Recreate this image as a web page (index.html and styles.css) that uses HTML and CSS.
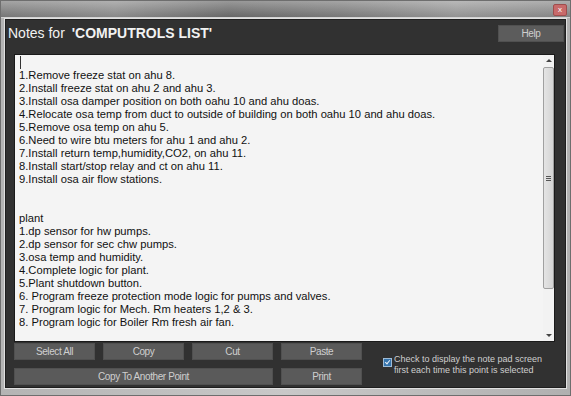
FILE: index.html
```html
<!DOCTYPE html>
<html lang="en">
<head>
  <meta charset="UTF-8">
  <title>Notes</title>
  <link rel="stylesheet" href="styles.css">
</head>
<body>
  <div class="window">
    <!-- blurred window caption -->
    <div class="caption">
      <span class="close">x</span>
    </div>

    <div class="panel">
      <header class="head">
        <h1>Notes for <b>'COMPUTROLS LIST'</b></h1>
        <button class="btn help">Help</button>
      </header>

      <!-- note pad -->
      <div class="notepad">
        <div class="notes">
          <div class="caret"></div>
          <p>1.Remove freeze stat on ahu 8.</p>
          <p>2.Install freeze stat on ahu 2 and ahu 3.</p>
          <p>3.Install osa damper position on both oahu 10 and ahu doas.</p>
          <p>4.Relocate osa temp from duct to outside of building on both oahu 10 and ahu doas.</p>
          <p>5.Remove osa temp on ahu 5.</p>
          <p>6.Need to wire btu meters for ahu 1 and ahu 2.</p>
          <p>7.Install return temp,humidity,CO2, on ahu 11.</p>
          <p>8.Install start/stop relay and ct on ahu 11.</p>
          <p>9.Install osa air flow stations.</p>
          <p>&nbsp;</p>
          <p>&nbsp;</p>
          <p>plant</p>
          <p>1.dp sensor for hw pumps.</p>
          <p>2.dp sensor for sec chw pumps.</p>
          <p>3.osa temp and humidity.</p>
          <p>4.Complete logic for plant.</p>
          <p>5.Plant shutdown button.</p>
          <p>6. Program freeze protection mode logic for pumps and valves.</p>
          <p>7. Program logic for Mech. Rm heaters 1,2 &amp; 3.</p>
          <p>8. Program logic for Boiler Rm fresh air fan.</p>
        </div>
        <div class="scrollbar">
          <span class="arrow up"></span>
          <div class="track">
            <div class="thumb"><span class="grip"></span></div>
          </div>
          <span class="arrow down"></span>
        </div>
      </div>

      <!-- actions -->
      <div class="controls">
        <div class="buttons">
          <button class="btn">Select All</button>
          <button class="btn">Copy</button>
          <button class="btn">Cut</button>
          <button class="btn">Paste</button>
          <button class="btn wide">Copy To Another Point</button>
          <button class="btn">Print</button>
        </div>
        <label class="check">
          <span class="box"></span>
          <span>Check to display the note pad screen<br>first each time this point is selected</span>
        </label>
      </div>
    </div>
  </div>
</body>
</html>
```

FILE: styles.css
```css
/* Page: dark dialog inside a grey frame */
body {
  margin: 0;
  font-family: 'Liberation Sans', Arial, sans-serif;
  background: #9c9c9c;
}

.window {
  width: 571px;
  height: 396px;
  box-sizing: border-box;
  padding: 0 4px 7px 4px;
  background: linear-gradient(to right, #b4b4b4, #c8c8c8 50%, #b0b0b0);
  border: 1px solid #6e6e6e;
  display: flex;
  flex-direction: column;
}

/* Caption strip (blurred in the capture) */
.caption {
  height: 16px;
  flex: none;
  display: flex;
  justify-content: flex-end;
  align-items: flex-end;
  padding: 0 3px 0 4px;
  background:
    linear-gradient(to bottom, rgba(255,255,255,0.3), rgba(0,0,0,0.05)),
    linear-gradient(to right, #7c7c7c, #8f8f8f 20%, #6c6c6c 40%, #7e7e7e 60%, #9a9a9a 80%, #8a8a8a);
  margin: 0 -4px;
  border-bottom: 1px solid #d2d2d2;
}
.close {
  width: 14px;
  height: 12px;
  margin-bottom: 1px;
  background: #c86a6a;
  border: 1px solid #9e4d4d;
  border-radius: 2px;
  color: #fff;
  font-size: 8px;
  line-height: 10px;
  text-align: center;
  box-sizing: border-box;
}

.panel {
  flex: 1;
  background: #313131;
  border: 1px solid #1e1e1e;
  box-shadow: 0 0 0 1px #e0e0e0;
  margin-top: 1px;
  padding: 4px 1px 0 7px;
  display: flex;
  flex-direction: column;
}

/* Header row */
.head {
  display: flex;
  align-items: center;
  justify-content: space-between;
  height: 18px;
  margin-left: -5px;
}
.head h1 {
  margin: 0;
  font-size: 14px;
  font-weight: 400;
  color: #f2f2f2;
  white-space: pre;
}
.head h1 b {
  margin-left: 3px;
  font-weight: 700;
}

/* Grey flat buttons */
.btn {
  font-family: 'Liberation Sans', Arial, sans-serif;
  font-size: 10px;
  letter-spacing: -0.4px;
  color: #cfcfcf;
  background: #5a5a5a;
  border: 1px solid #505050;
  height: 17px;
  padding: 0;
  margin: 0;
}
.btn.help {
  flex: none;
  width: 66px;
  height: 17px;
  background: #5c5c5c;
}

/* Note pad */
.notepad {
  margin: 12px 9px 0 1px;
  height: 286px;
  display: flex;
  background: #f4f4f4;
  border: 1px solid #1a1a1a;
}
.notes {
  flex: 1;
  padding: 1px 0 0 4px;
  font-size: 11.2px;
  line-height: 13px;
  color: #111;
}
.notes p {
  margin: 0;
  white-space: nowrap;
}
.caret {
  width: 1px;
  height: 13px;
  background: #333;
  margin: 0 0 0 1px;
}

.scrollbar {
  width: 11px;
  display: flex;
  flex-direction: column;
  background: #f2f2f2;
}
.arrow {
  height: 11px;
  position: relative;
}
.arrow::after {
  content: '';
  position: absolute;
  left: 3px;
  top: 4px;
  border-left: 3px solid transparent;
  border-right: 3px solid transparent;
}
.arrow.up::after { border-bottom: 3px solid #444; }
.arrow.down::after { border-top: 3px solid #444; }
.track {
  flex: 1;
  padding-top: 1px;
}
.thumb {
  height: 222px;
  box-sizing: border-box;
  background: linear-gradient(to right, #e4e4e4, #d4d4d4);
  border: 1px solid #a0a0a0;
  border-radius: 2px;
  display: flex;
  align-items: center;
  justify-content: center;
}
.grip {
  width: 5px;
  height: 5px;
  background: repeating-linear-gradient(to bottom, #555 0 1px, transparent 1px 2px);
}

/* Bottom controls */
.controls {
  display: flex;
  align-items: flex-start;
  margin: 1px 0 0 1px;
}
.buttons {
  display: grid;
  grid-template-columns: repeat(4, 81px);
  column-gap: 8px;
  row-gap: 8px;
}
.buttons .wide { grid-column: span 3; }
.check {
  display: flex;
  align-items: flex-start;
  gap: 2px;
  margin: 11px 0 0 21px;
  font-size: 9px;
  line-height: 11px;
  color: #cfcfcf;
}
.box {
  width: 9px;
  height: 9px;
  margin-top: 4px;
  box-sizing: border-box;
  background: #3574ad;
  border: 1px solid #9fbcd6;
  position: relative;
}
.box::after {
  content: '';
  position: absolute;
  left: 2px;
  top: 0;
  width: 2px;
  height: 4px;
  border: solid #e8f0f8;
  border-width: 0 1px 1px 0;
  transform: rotate(40deg);
}
```
